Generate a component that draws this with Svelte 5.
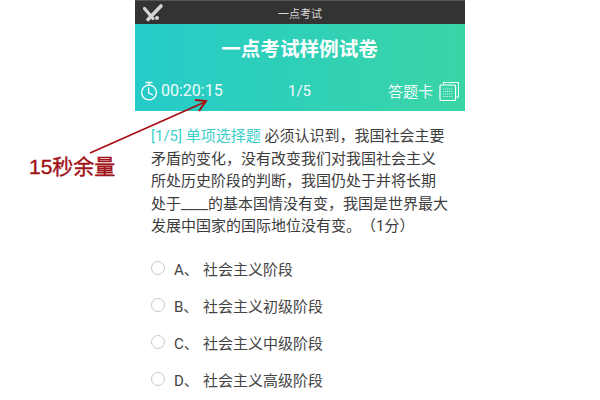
<script lang="ts">
  interface Option {
    readonly letter: string;
    readonly text: string;
  }

  const options: Option[] = [
    { letter: 'A', text: '社会主义阶段' },
    { letter: 'B', text: '社会主义初级阶段' },
    { letter: 'C', text: '社会主义中级阶段' },
    { letter: 'D', text: '社会主义高级阶段' },
  ];
</script>

<div class="stage">
  <section class="phone">
    <header class="status">
      <svg class="logo" viewBox="0 0 24 20" width="24" height="20" aria-hidden="true">
        <path d="M19 3 L6 16.5" stroke="#d4d4d4" stroke-width="3.6" stroke-linecap="round" fill="none" />
        <path d="M2.5 5.5 L11 15.5" stroke="#d4d4d4" stroke-width="3.2" stroke-linecap="round" fill="none" />
        <circle cx="15" cy="15" r="2" fill="#d4d4d4" />
      </svg>
      <span class="status-title">一点考试</span>
    </header>

    <div class="banner">
      <h1>一点考试样例试卷</h1>
      <div class="meta">
        <div class="timer">
          <svg viewBox="0 0 18 20" width="18" height="20" aria-hidden="true">
            <circle cx="9" cy="11.5" r="7.4" fill="none" stroke="#fff" stroke-width="1.3" />
            <path d="M5.5 1.5 H12.5 M9 2 V4 M8.6 6.5 V11.8 L12.8 14" fill="none" stroke="#fff" stroke-width="1.3" />
          </svg>
          <span>00:20:15</span>
        </div>
        <span class="progress">1/5</span>
        <div class="card">
          <span>答题卡</span>
          <svg viewBox="0 0 20 20" width="20" height="20" aria-hidden="true">
            <path d="M4.5 3.5 V1.5 H19.5 V16 H16.5" fill="none" stroke="#fff" stroke-width="1.1" opacity="0.9" />
            <rect x="1" y="4" width="15.5" height="15.5" rx="1" fill="none" stroke="#fff" stroke-width="1.2" />
            <path d="M4 8 H13.5 M4 10.5 H13.5 M4 13 H13.5 M4 15.5 H13.5" stroke="#fff" stroke-width="1" stroke-dasharray="1.2 0.8" opacity="0.7" />
          </svg>
        </div>
      </div>
    </div>

    <div class="body">
      <p class="question">
        <span class="tag">[1/5] 单项选择题</span>
        必须认识到，我国社会主要矛盾的变化，没有改变我们对我国社会主义所处历史阶段的判断，我国仍处于并将长期处于____的基本国情没有变，我国是世界最大发展中国家的国际地位没有变。（1分）
      </p>

      <ul class="options">
        {#each options as option (option.letter)}
          <li>
            <span class="radio"></span>
            <span class="letter">{option.letter}、</span>
            <span>{option.text}</span>
          </li>
        {/each}
      </ul>
    </div>
  </section>

  <div class="note">
    <svg class="arrow" viewBox="0 0 125 62" width="125" height="62" aria-hidden="true">
      <path d="M1 60 L116 9" stroke="#a80d12" stroke-width="1.6" fill="none" />
      <path d="M106 7 L117 8 L110 18" stroke="#a80d12" stroke-width="2" fill="none" />
    </svg>
    <span class="note-label">15秒余量</span>
  </div>
</div>

<style>
  :global(body) {
    margin: 0;
    background: #fff;
  }

  .stage {
    position: relative;
    width: 600px;
    height: 400px;
    overflow: hidden;
    display: flex;
    justify-content: center;
    font-family: "Roboto", "Noto Sans CJK SC", sans-serif;
    font-feature-settings: "chws" 0;
    text-spacing-trim: space-all;
  }

  .phone {
    width: 330px;
    display: flex;
    flex-direction: column;
  }

  .status {
    position: relative;
    height: 24px;
    flex: none;
    background: #333;
    border-top: 1px solid #555;
    box-sizing: border-box;
    display: flex;
    align-items: center;
    justify-content: center;
  }

  .logo {
    position: absolute;
    left: 7px;
    top: 2px;
  }

  .status-title {
    color: #d8d8d8;
    font-size: 11px;
  }

  .banner {
    height: 87px;
    flex: none;
    box-sizing: border-box;
    background: linear-gradient(90deg, #25cbc9, #3ad5a6);
    color: #fff;
    display: flex;
    flex-direction: column;
    padding: 13px 6px 10px 5px;
  }

  .banner h1 {
    margin: 0;
    text-align: center;
    font-size: 19.6px;
    font-weight: 700;
    line-height: 26px;
  }

  .meta {
    margin-top: auto;
    display: grid;
    grid-template-columns: 1fr auto 1fr;
    align-items: center;
    font-size: 15px;
    color: #f2fbf9;
  }

  .timer {
    display: flex;
    align-items: center;
    gap: 3px;
  }

  .timer span {
    font-size: 16px;
  }

  .card {
    display: flex;
    align-items: center;
    justify-content: flex-end;
    gap: 6px;
  }

  .timer svg,
  .card svg {
    flex: none;
  }

  .body {
    padding: 14px 16px 0 16px;
    color: #3c3c3c;
  }

  .question {
    margin: 0;
    font-size: 15px;
    line-height: 22.5px;
  }

  .tag {
    color: #3ccfca;
  }

  .options {
    list-style: none;
    margin: 19.5px 0 0;
    padding: 0;
    display: flex;
    flex-direction: column;
    gap: 15px;
    font-size: 15px;
    color: #444;
  }

  .options li {
    display: flex;
    align-items: center;
    height: 22px;
  }

  .radio {
    width: 12px;
    height: 12px;
    border: 1.5px solid #c8c8c8;
    border-radius: 50%;
    margin-right: 9px;
    flex: none;
  }

  .letter {
    width: 29px;
    flex: none;
  }

  /* callout drawn on top of the screenshot */
  .note {
    position: absolute;
    left: 0;
    top: 0;
  }

  .arrow {
    position: absolute;
    left: 89px;
    top: 93px;
  }

  .note-label {
    position: absolute;
    left: 29px;
    top: 155px;
    white-space: nowrap;
    color: #a01218;
    font-size: 21px;
    line-height: 24px;
    -webkit-text-stroke: 0.4px #a01218;
    font-family: "Liberation Sans", "Noto Sans CJK SC", sans-serif;
  }
</style>
